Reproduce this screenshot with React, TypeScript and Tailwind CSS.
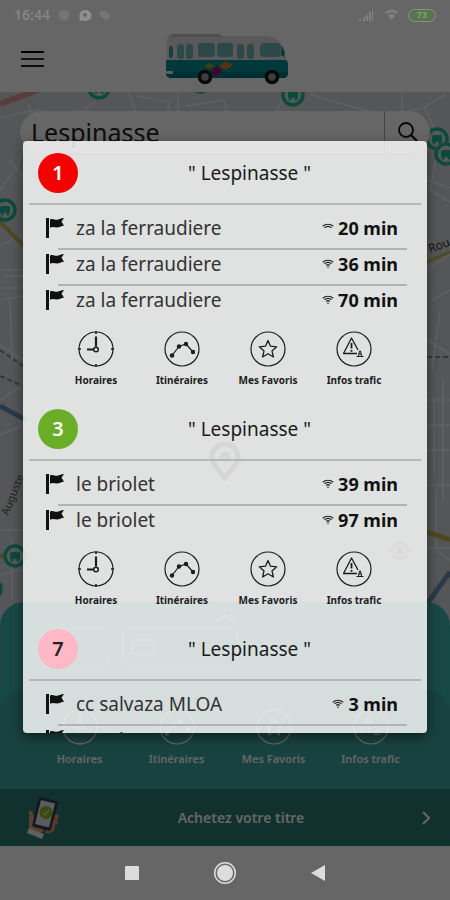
import { useState } from "react"

const stops = [
  {
    line: "1",
    color: "bg-[#f40000] text-white",
    stop: "Lespinasse",
    departures: [
      { to: "za la ferraudiere", min: 20, signal: 1 },
      { to: "za la ferraudiere", min: 36, signal: 2 },
      { to: "za la ferraudiere", min: 70, signal: 3 },
    ],
  },
  {
    line: "3",
    color: "bg-[#6aae28] text-white",
    stop: "Lespinasse",
    departures: [
      { to: "le briolet", min: 39, signal: 3 },
      { to: "le briolet", min: 97, signal: 2 },
    ],
  },
  {
    line: "7",
    color: "bg-[#ffb9c6] text-[#222]",
    stop: "Lespinasse",
    departures: [
      { to: "cc salvaza MLOA", min: 3, signal: 2 },
      { to: "cc salvaza MLOA", min: 33, signal: 3 },
    ],
  },
]

function ClockIcon() {
  return (
    <svg viewBox="0 0 36 36" className="size-9" fill="none" stroke="currentColor">
      <circle cx="18" cy="18" r="17" strokeWidth="1.2" />
      <path d="M18 0v3M18 33v3M0 18h3M33 18h3" strokeWidth="1.6" />
      <path d="M18 5.500v10M9 18.500h6.500" strokeWidth="2.200" />
      <circle cx="18" cy="18.500" r="2.300" strokeWidth="1.500" />
    </svg>
  )
}

function RouteIcon() {
  return (
    <svg viewBox="0 0 36 36" className="size-9" fill="none" stroke="currentColor">
      <circle cx="18" cy="18" r="17" strokeWidth="1.2" />
      <path d="M8 24.500L15 15.500L22 13L29 21" strokeWidth="1.200" />
      <g fill="currentColor" stroke="none">
        <circle cx="8" cy="24.500" r="2.200" />
        <circle cx="15" cy="15.500" r="2.200" />
        <circle cx="22" cy="13" r="2.200" />
        <circle cx="29" cy="21" r="2.200" />
      </g>
    </svg>
  )
}

function StarIcon() {
  return (
    <svg viewBox="0 0 36 36" className="size-9" fill="none" stroke="currentColor">
      <circle cx="18" cy="18" r="17" strokeWidth="1.2" />
      <path
        d="M18 9.500l2.500 5.700 6.200.6-4.700 4.100 1.400 6.100-5.400-3.200-5.400 3.200 1.400-6.100-4.700-4.100 6.200-.6z"
        strokeWidth="1.300"
        strokeLinejoin="round"
      />
    </svg>
  )
}

function TrafficIcon() {
  return (
    <svg viewBox="0 0 36 36" className="size-9" fill="none" stroke="currentColor">
      <circle cx="18" cy="18" r="17" strokeWidth="1.2" />
      <path d="M21 22.500H7.500L15.500 7l6.500 12" strokeWidth="1.300" strokeLinejoin="round" />
      <path d="M15.500 12v5.500M15.500 19v1.800" strokeWidth="1.800" />
      <path d="M20.500 25.500h7M22.500 25l1-5h1l1 5M22.500 23h3" strokeWidth="1" />
    </svg>
  )
}

const actions = [
  { label: "Horaires", Icon: ClockIcon },
  { label: "Itinéraires", Icon: RouteIcon },
  { label: "Mes Favoris", Icon: StarIcon },
  { label: "Infos trafic", Icon: TrafficIcon },
]

function FlagIcon() {
  return (
    <svg viewBox="0 0 20 22" className="h-[22px] w-5 shrink-0" fill="#111">
      <path d="M0 1h3v20H0z" />
      <path d="M4 2.500c3-1.500 5 .8 7.500.2 2-.4 3.500-1.500 6.500-1.700l-2.500 3.700 2.500 4c-3 .2-4.500 1.700-7 1.700-2.500 0-4-1.200-7 .3z" />
    </svg>
  )
}

function SignalIcon({ level }) {
  return (
    <svg viewBox="0 0 12 10" className="h-[10px] w-3" fill="none" stroke="#222" strokeWidth="1.200">
      <path d="M.8 3.200C3.500.6 8.500.6 11.200 3.200" />
      <path d="M2.500 4.800c2-1.700 5-1.700 7 0" />
      {level > 1 && <path d="M4.200 6.500c1-.9 2.600-.9 3.600 0" />}
      {level > 1 && <circle cx="6" cy="8.200" r=".8" fill="#222" stroke="none" />}
    </svg>
  )
}

function BusLogo() {
  return (
    <svg viewBox="0 0 124 52" className="h-[52px] w-[124px]">
      <path d="M8 1h44c4 0 4 2 8 2h42c8 0 14 5 16 12l4 14H2V8c0-4 2-7 6-7z" fill="#dedede" />
      <path d="M8 1h44c4 0 5 3 5 3H6s0-3 2-3z" fill="#c2c2c2" />
      <path d="M1 27h119c2 0 3 2 3 4v8c0 4-2 6-5 6H7c-4 0-6-2-6-5z" fill="#008c96" />
      <path d="M1 39h122c0 4-2 6-5 6H7c-4 0-6-2-6-6z" fill="#007680" />
      <g fill="#6fb5b3">
        <rect x="4" y="13" width="4" height="12" rx="2" fill="#3f9ba3" />
        <rect x="12" y="11" width="7" height="15" rx="3" />
        <rect x="21" y="11" width="7" height="15" rx="3" />
        <rect x="33" y="10" width="17" height="14" rx="3" />
        <rect x="52" y="10" width="16" height="14" rx="3" />
        <rect x="72" y="11" width="7" height="15" rx="3" />
        <rect x="82" y="11" width="7" height="15" rx="3" />
        <rect x="95" y="10" width="21" height="14" rx="4" />
        <path d="M117 12l3 8-1 4-3-2z" fill="#17878c" />
      </g>
      <path d="M39 33l5-3 6 3-6 3z" fill="#a5a313" />
      <path d="M54 33l6-5 8 4-7 5z" fill="#d07a30" />
      <path d="M46 38l6-5 5 5-6 5z" fill="#b00070" />
      <rect x="1" y="38" width="7" height="3" rx="1" fill="#e8e8e8" />
      <g stroke="#161616" strokeWidth="3.500" fill="#999">
        <circle cx="40" cy="44" r="5.500" />
        <circle cx="107" cy="44" r="5.500" />
      </g>
    </svg>
  )
}

function BusMarker({ x, y }) {
  return (
    <g transform={`translate(${x} ${y})`}>
      <circle r="10" fill="#d3dedc" stroke="#23b79c" strokeWidth="3.500" />
      <rect x="-5" y="-4" width="10" height="7" rx="1.500" fill="#23b79c" />
      <circle cx="-3" cy="4" r="1.500" fill="#23b79c" />
      <circle cx="3" cy="4" r="1.500" fill="#23b79c" />
    </g>
  )
}

function CityMap() {
  return (
    <svg
      viewBox="0 92 450 754"
      preserveAspectRatio="xMidYMin slice"
      className="absolute inset-0 size-full bg-[#d5d8db]"
      fill="none"
    >
      <g stroke="#f0f1f2" strokeWidth="1.500">
        <path d="M0 118l35-8 40 6 20-14M28 105l12 30M75 108l18 14h48M128 92l8 20M137 96l32 6-2 14h-28M178 92v22M186 106l38-6 3 14M275 115l10-22M310 94l18 6 55 15M402 92v20l22-4 22-14M425 108l10 22" />
        <path d="M0 190l18-24 5-20M10 160l30 40M0 245l24-10M0 270h23M3 276h20v12H3M0 300l22-4M10 300l2 60M0 345l23 15M0 400l23-15M8 405l16 20M0 435l23-10M0 530h23M0 575l24-6M12 540v60" />
        <path d="M427 180l23 8M436 160l-6 30 20 12M427 270l23-16M432 300l18-10M427 340l23 14M440 310l-8 60M427 400h23M434 396v80M443 380v120M427 425h23M427 450h23M427 485h23M436 490v60l14 10M427 548h23" />
      </g>
      <path d="M0 104l38-14" stroke="#d99c94" strokeWidth="6" />
      <path d="M0 222l24 24" stroke="#c2b758" strokeWidth="4" />
      <path d="M0 556h20M427 532l23 8" stroke="#c4b44c" strokeWidth="5" />
      <path d="M0 406l26 14" stroke="#6890c0" strokeWidth="5" />
      <path d="M450 572l-26 36" stroke="#6e8fbc" strokeWidth="5" />
      <path d="M0 350l23 16M0 376l23 10M427 357h23" stroke="#85898c" strokeWidth="2" strokeDasharray="5 3" />
      <path d="M424 263l26-11" stroke="#c4b95c" strokeWidth="3" />
      <g fontFamily="Noto Sans" fontSize="12" fill="#333">
        <text transform="translate(430 253) rotate(-20)">Rou</text>
        <text transform="translate(8 516) rotate(-68)" fontSize="11" fill="#555">Auguste</text>
      </g>
      <BusMarker x={99} y={88} />
      <BusMarker x={201} y={82} />
      <BusMarker x={293} y={95} />
      <BusMarker x={437} y={139} />
      <BusMarker x={446} y={154} />
      <BusMarker x={5} y={210} />
      <BusMarker x={15} y={556} />
      <BusMarker x={-9} y={589} />
      <g stroke="#333" strokeWidth="5">
        <path d="M225 478c-7-9-13-14-13-21a13 13 0 0 1 26 0c0 7-6 12-13 21z" />
        <circle cx="225" cy="457" r="3" strokeWidth="4" />
      </g>
      <g stroke="#777" strokeWidth="2">
        <circle cx="400" cy="551" r="8" />
        <circle cx="400" cy="551" r="3" fill="#777" />
        <path d="M400 539v4M400 559v4M388 551h4M408 551h4" />
      </g>
    </svg>
  )
}

function PhoneInHand() {
  return (
    <svg viewBox="0 0 36 44" className="h-11 w-9">
      <path d="M4 15c3-2 4 2 5 8l10 12-8 4-7-6z" fill="#e79e76" />
      <path d="M29 19l4-1 1 4-2 2 1 4-3 1v4c-2 4-6 5-10 4z" fill="#e08f68" />
      <path d="M16 1l15 4c2 .5 2 1.500 2 3l-7 25c-.5 1.500-1.500 2-3 1.500L9 31c-1.500-.5-2-1.500-1.500-3l6-25c.5-1.500 1-2 2.500-2z" fill="#2d3a52" />
      <path d="M16 4l14 3.500-6 24L10 28z" fill="#dfe4ea" />
      <circle cx="21" cy="16.500" r="6.500" fill="#88b926" />
      <path d="M18 17l2 2 4-5" fill="none" stroke="#d7e8b0" strokeWidth="1.500" />
      <path d="M4 32l15 6-2 5-15-6z" fill="#eee" />
    </svg>
  )
}

function StatusBar() {
  return (
    <div className="relative z-20 flex h-[30px] items-center justify-between px-3.5 text-[#858585]">
      <div className="flex items-center gap-2">
        <span className="text-[14px] font-semibold leading-5">16:44</span>
        <svg viewBox="0 0 54 12" className="h-3 w-[54px]" fill="#757575">
          <circle cx="6" cy="6" r="5.500" />
          <path d="M27 1a6 5.500 0 1 1-2 10.500L21 12l1-3a6 5.500 0 0 1 5-8z" fill="#909090" />
          <circle cx="27" cy="6" r="2" fill="#666" />
          <path d="M42 2h6l5 5-5 5-6-5z" />
        </svg>
      </div>
      <div className="flex items-center gap-2.5">
        <svg viewBox="0 0 40 12" className="h-3 w-10" fill="#808080">
          <path d="M1 10h2v2H1zM5 8h2v4H5zM8 6h2v6H8zM11 3h2v9h-2zM14 0h1v12h-1z" />
          <path d="M27 3c4-3.500 9-3.500 13 0l-2 2c-3-2.500-6-2.500-9 0zM30 6.500c2-2 5-2 7 0L33.500 11z" />
        </svg>
        <span className="flex h-[13px] w-7 items-center justify-center rounded-full border border-[#8a9185] bg-[#5a7350] text-[9px] font-bold text-[#74ae57]">
          73
        </span>
      </div>
    </div>
  )
}

function LineCard({ line, color, stop, departures }) {
  return (
    <section>
      <header className="mx-1.5 flex h-16 items-center border-b-2 border-[#b5b8b8] pl-[9px] pt-0.5">
        <span className={`flex size-10 items-center justify-center rounded-full text-[20px] font-semibold ${color}`}>
          {line}
        </span>
        <h2 className="flex-1 text-center text-[19px] leading-6 text-[#1b1b1b]">" {stop} "</h2>
      </header>
      <ul className="pt-[9px]">
        {departures.map((d, i) => (
          <li key={i} className="relative flex h-9 items-center pb-2 pl-[23px] pr-[29px]">
            <FlagIcon />
            <span className="ml-2.5 flex-1 text-[19px] leading-6 text-[#333]">{d.to}</span>
            <SignalIcon level={d.signal} />
            <span className="ml-1 text-[18px] font-bold leading-6 text-[#111]">{d.min} min</span>
            {i < departures.length - 1 && (
              <span className="absolute bottom-0 left-[35px] right-5 border-b-2 border-[#b0b3b3]" />
            )}
          </li>
        ))}
      </ul>
      <div className="grid grid-cols-4 px-[30px] pb-2.5 pt-[9px]">
        {actions.map(({ label, Icon }) => (
          <button key={label} className="flex flex-col items-center gap-[7px] text-[10px] font-bold leading-[13px] text-[#1c1c1c]">
            <Icon />
            <span className="whitespace-nowrap">{label}</span>
          </button>
        ))}
      </div>
    </section>
  )
}

export default function App() {
  const [query, setQuery] = useState("Lespinasse")

  return (
    <div className="relative flex h-screen flex-col overflow-hidden bg-white font-['Noto_Sans',sans-serif]">
      <StatusBar />
      <div className="relative flex h-[62px] items-center justify-center pb-1 pl-1 shadow-md">
        <button aria-label="Menu" className="absolute left-[21px] flex w-[23px] flex-col gap-[5px]">
          <span className="h-[2px] bg-black" />
          <span className="h-[2px] bg-[#333]" />
          <span className="h-[2px] bg-[#222]" />
        </button>
        <BusLogo />
      </div>

      <main className="relative flex flex-1 flex-col justify-between">
        <CityMap />
        <div className="relative mx-5 mt-[19px] flex h-[42px] items-center rounded-full bg-white shadow">
          <input
            aria-label="Arrêt"
            value={query}
            onChange={(e) => setQuery(e.target.value)}
            className="min-w-0 flex-1 bg-transparent pl-[11px] text-[25px] leading-8 text-[#222] outline-none"
          />
          <button aria-label="Rechercher" className="flex h-full w-[46px] items-center justify-center border-l border-[#aaa]">
            <svg viewBox="0 0 20 20" className="size-5" fill="none" stroke="#111" strokeWidth="1.800">
              <circle cx="8" cy="8" r="7" />
              <path d="M13 13l6 6" strokeWidth="2.200" />
            </svg>
          </button>
        </div>

        <div className="relative h-[187px] rounded-t-[24px] bg-[#3cb5ad]">
          <div className="flex h-[88px] flex-col gap-1.5 px-[42px] pt-3 text-white/50">
            <svg viewBox="0 0 20 8" className="mx-auto h-2 w-5" fill="none" stroke="white" strokeWidth="2">
              <path d="M2 7l8-6 8 6" />
            </svg>
            <div className="flex gap-3.5">
              <span className="h-[38px] w-[66px] rounded-lg border border-current" />
              <span className="flex h-[38px] w-[116px] items-center rounded-lg border border-current pl-2">
                <span className="h-4 w-6 rounded-sm border-2 border-current" />
              </span>
            </div>
          </div>
          <div className="grid grid-cols-4 rounded-t-[24px] bg-[#3ca69e] px-[31px] pt-[19px] text-white">
            {actions.map(({ label, Icon }) => (
              <button key={label} className="flex flex-col items-center gap-1.5 pb-[22px] text-[11px] font-semibold leading-4">
                <Icon />
                <span className="whitespace-nowrap">{label}</span>
              </button>
            ))}
          </div>
        </div>
      </main>

      <a href="#titre" className="flex h-[57px] items-center justify-between bg-[#2b7a75] pl-[25px] pr-[19px] text-white">
        <PhoneInHand />
        <span className="text-[14px] font-semibold leading-5">Achetez votre titre</span>
        <svg viewBox="0 0 10 14" className="h-3.5 w-2.5" fill="none" stroke="currentColor" strokeWidth="2">
          <path d="M2 1l6 6-6 6" />
        </svg>
      </a>

      <nav className="relative z-20 flex h-[54px] items-center justify-center gap-[74px] text-[#dcdcdc]">
        <button aria-label="Récents" className="size-3.5 rounded-[1px] bg-current" />
        <button aria-label="Accueil">
          <svg viewBox="0 0 24 24" className="size-6" fill="none" stroke="currentColor">
            <circle cx="12" cy="12" r="10.300" strokeWidth="1.500" />
            <circle cx="12" cy="12" r="8" fill="currentColor" stroke="none" />
          </svg>
        </button>
        <button aria-label="Retour">
          <svg viewBox="0 0 14 16" className="h-4 w-3.5" fill="currentColor">
            <path d="M14 0v16L0 8z" />
          </svg>
        </button>
      </nav>

      <div className="absolute inset-0 z-10 flex bg-black/60 px-[23px] pb-[167px] pt-[141px]">
        <div
          role="dialog"
          aria-label="Prochains passages"
          className="flex-1 overflow-y-auto rounded bg-[#fcfcfc]/84 shadow-[0_4px_12px_rgba(0,0,0,0.5)] [scrollbar-width:none]"
        >
          {stops.map((s) => (
            <LineCard key={s.line} {...s} />
          ))}
        </div>
      </div>
    </div>
  )
}
